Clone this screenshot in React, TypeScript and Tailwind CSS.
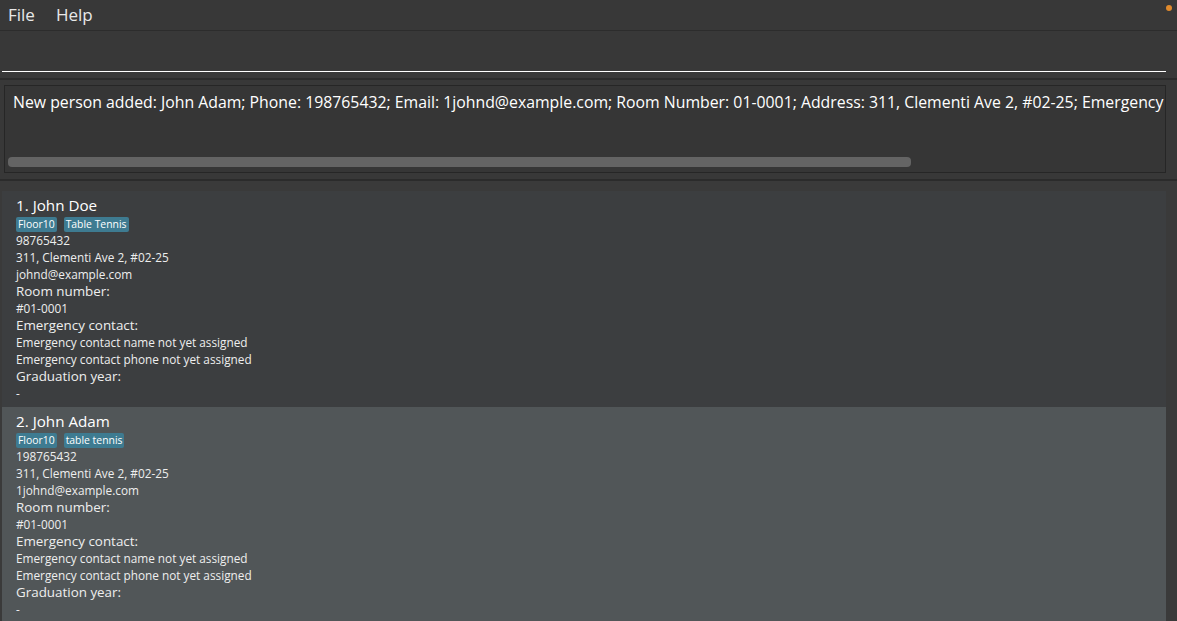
import React from "react";

type Person = {
  idx: number;
  name: string;
  tags: string[];
  phone: string;
  address: string;
  email: string;
  room: string;
  even: boolean;
};

const people: Person[] = [
  {
    idx: 1,
    name: "John Doe",
    tags: ["Floor10", "Table Tennis"],
    phone: "98765432",
    address: "311, Clementi Ave 2, #02-25",
    email: "johnd@example.com",
    room: "#01-0001",
    even: false,
  },
  {
    idx: 2,
    name: "John Adam",
    tags: ["Floor10", "table tennis"],
    phone: "198765432",
    address: "311, Clementi Ave 2, #02-25",
    email: "1johnd@example.com",
    room: "#01-0001",
    even: true,
  },
];

function Small({ children }: { children: React.ReactNode }) {
  return <div className="text-[11.8px] leading-[17px] text-[#eeeeee]">{children}</div>;
}

function Label({ children }: { children: React.ReactNode }) {
  return <div className="text-[13.4px] leading-[17px] text-[#eeeeee]">{children}</div>;
}

function Card({ p }: { p: Person }) {
  return (
    <div
      className={
        "h-[216px] pl-[14px] pt-[3px] text-white " +
        (p.even ? "bg-[#515658]" : "bg-[#3c3e40]")
      }
    >
      <div className="text-[15.2px] leading-[22px] text-white">
        {p.idx}. {p.name}
      </div>
      <div className="flex gap-[7px] h-[16px] pt-[1px] items-start">
        {p.tags.map((t) => (
          <span
            key={t}
            className="bg-[#3e7b91] text-white text-[10.4px] leading-[15px] px-[2px] rounded-[2px]"
          >
            {t}
          </span>
        ))}
      </div>
      <Small>{p.phone}</Small>
      <Small>{p.address}</Small>
      <Small>{p.email}</Small>
      <Label>Room number:</Label>
      <Small>{p.room}</Small>
      <Label>Emergency contact:</Label>
      <Small>Emergency contact name not yet assigned</Small>
      <Small>Emergency contact phone not yet assigned</Small>
      <Label>Graduation year:</Label>
      <Small>-</Small>
    </div>
  );
}

export default function App() {
  return (
    <div
      className="w-[1177px] h-[621px] bg-[#383838] flex flex-col overflow-hidden"
      style={{ fontFamily: '"Open Sans", "Noto Sans", sans-serif' }}
    >
      {/* menu bar */}
      <div className="h-[31px] flex items-center justify-between pl-[8px] pr-[5px] border-b border-[#2c2c2c] shrink-0">
        <div className="flex gap-[21px] text-[17px] text-[#e8e8e8]">
          <span>File</span>
          <span>Help</span>
        </div>
        <div className="self-start mt-[5px] w-[6px] h-[6px] rounded-full bg-[#e08a2c]" />
      </div>

      {/* command box */}
      <div className="h-[47px] shrink-0 px-[2px] pr-[11px]">
        <div className="h-[41px] border-b border-white" />
      </div>

      {/* separator */}
      <div className="h-[2px] bg-[#2b2b2b] shrink-0" />

      {/* result display */}
      <div className="h-[99px] shrink-0 pt-[5px] pl-[4px] pr-[11px]">
        <div className="h-[88px] border border-[#262626] bg-[#363636] relative overflow-hidden">
          <div className="pl-[8px] pt-[5px] text-[15.82px] leading-[22px] text-white whitespace-nowrap">
            New person added: John Adam; Phone: 198765432; Email: 1johnd@example.com; Room Number: 01-0001; Address: 311, Clementi Ave 2, #02-25; Emergency
          </div>
          <div className="absolute left-[3px] top-[71px] w-[903px] h-[10px] rounded-[4px] bg-[#646464]" />
        </div>
      </div>

      {/* separator */}
      <div className="h-[2px] bg-[#2b2b2b] shrink-0" />

      {/* list */}
      <div className="flex-1 pt-[10px] pl-[2px] pr-[11px] bg-[#3a3a3a] overflow-hidden">
        {people.map((p) => (
          <Card key={p.idx} p={p} />
        ))}
      </div>
    </div>
  );
}
